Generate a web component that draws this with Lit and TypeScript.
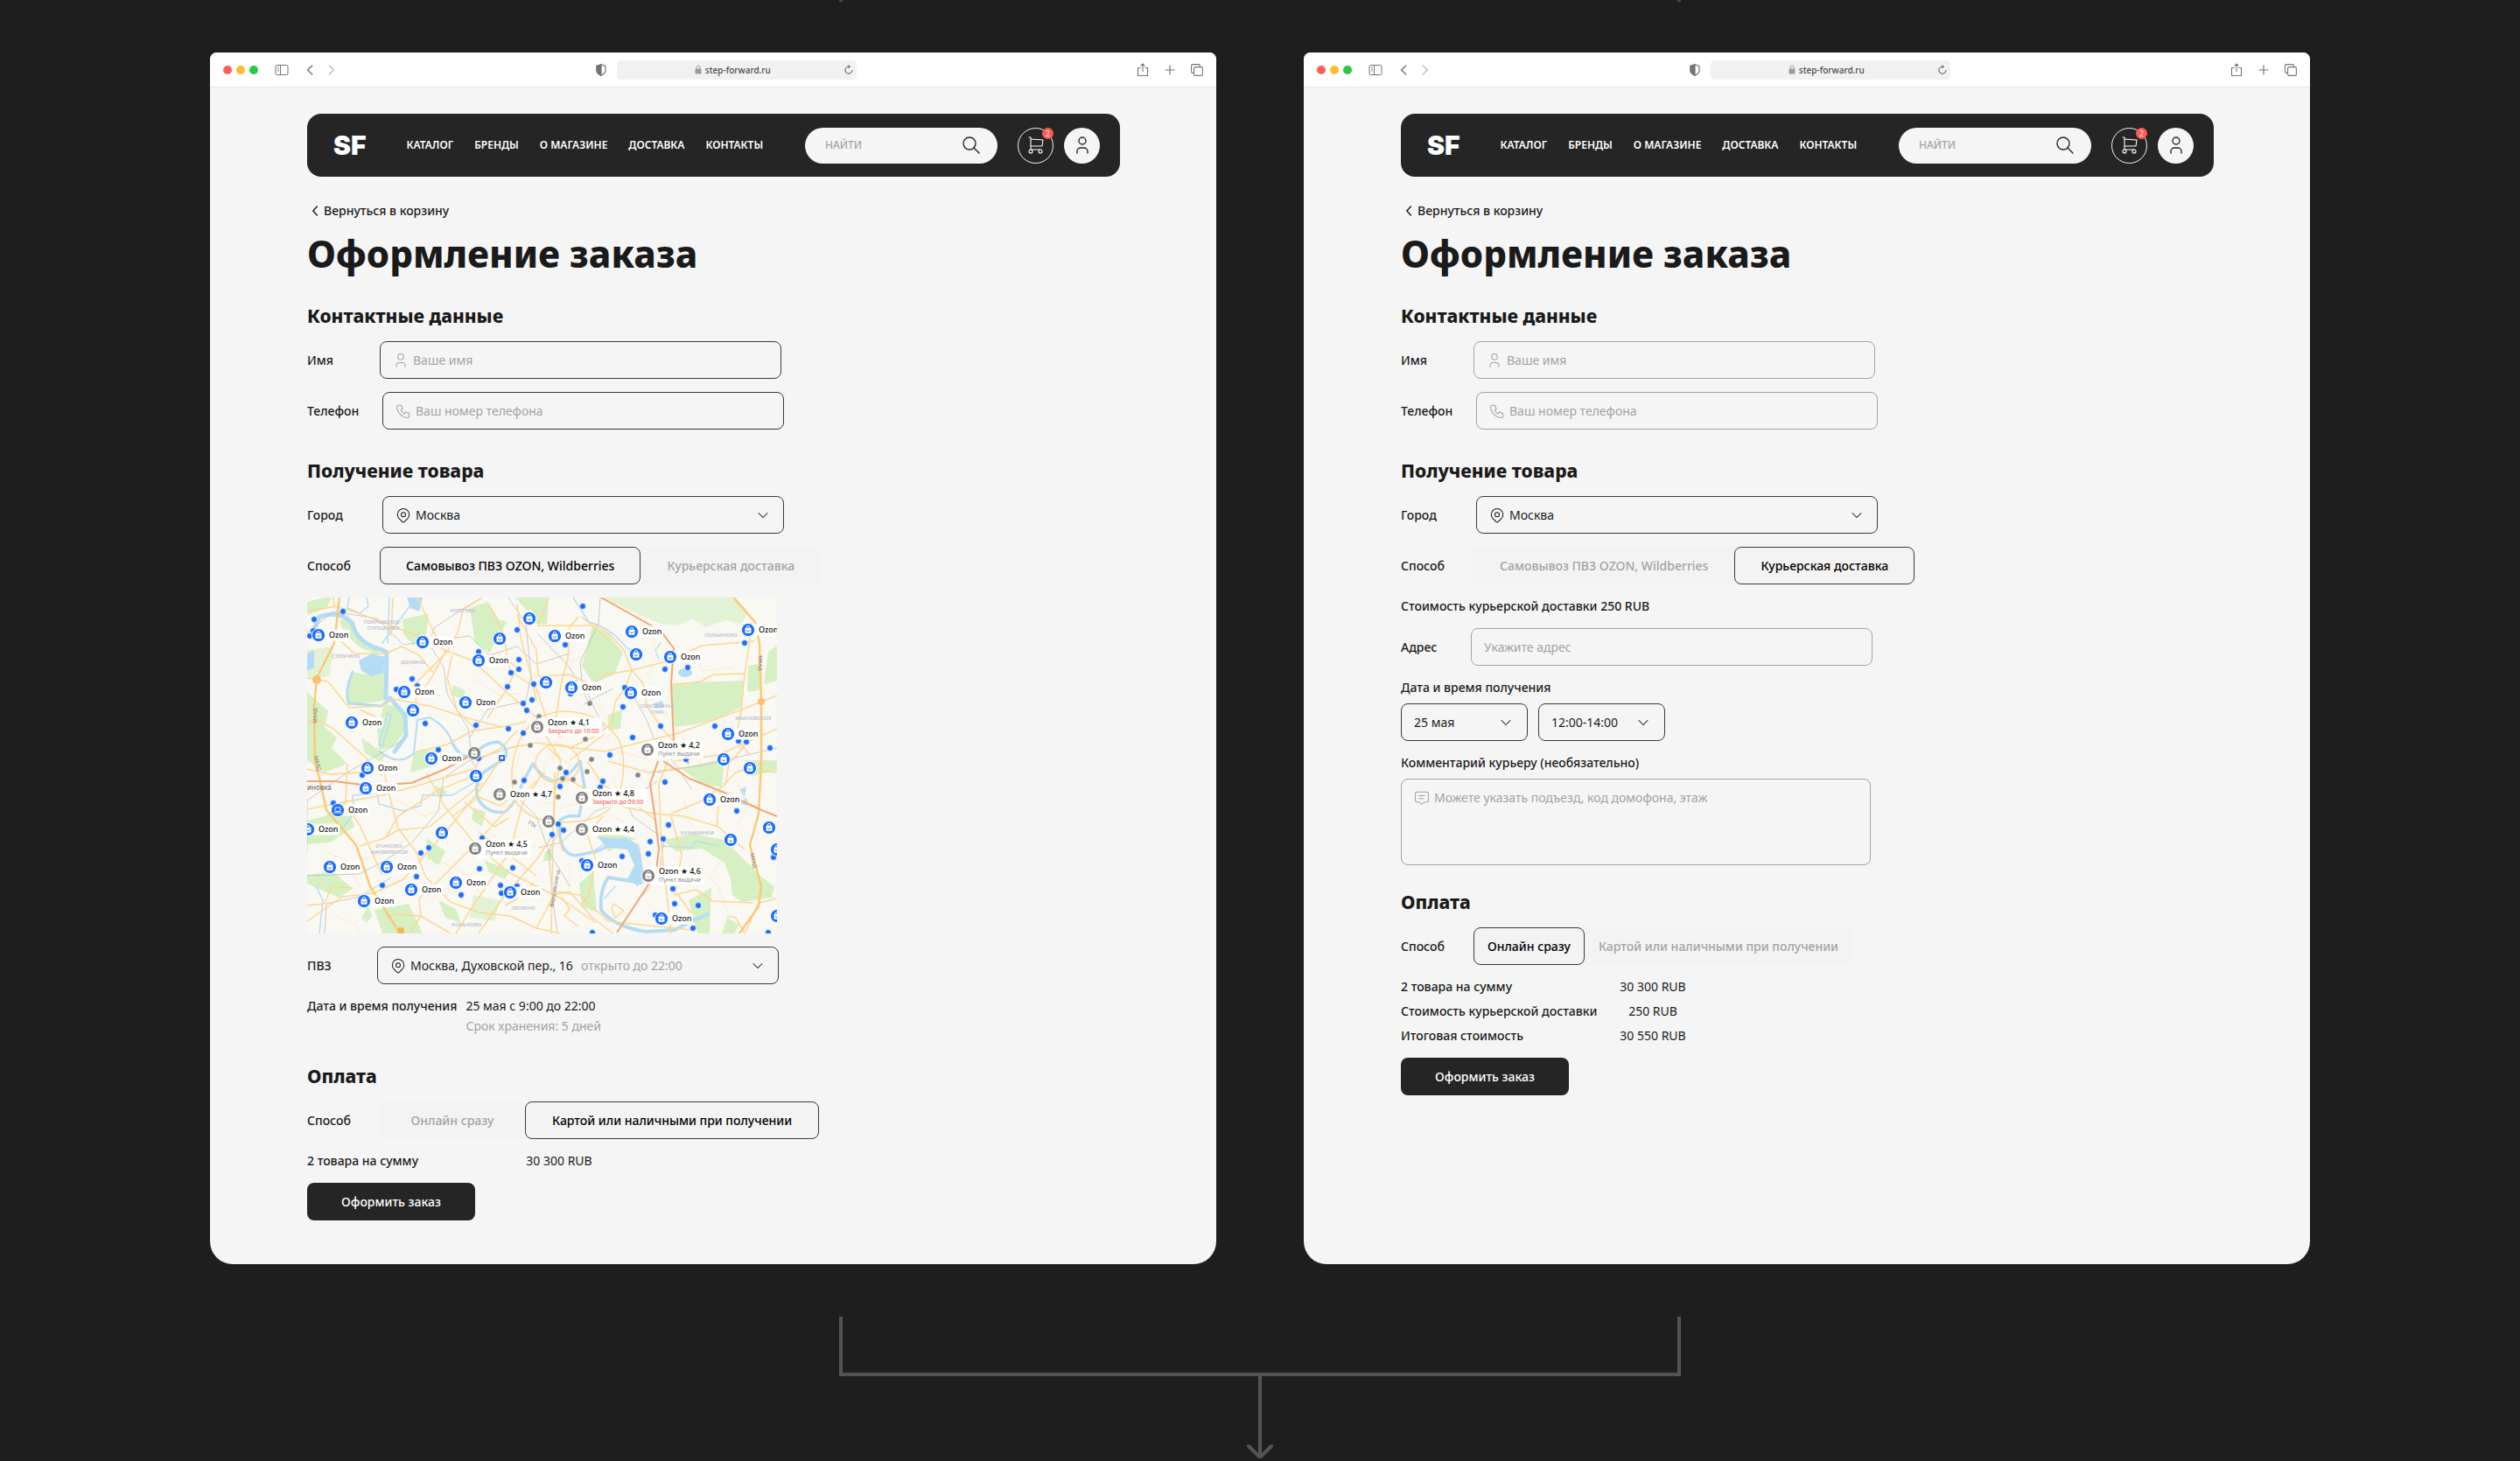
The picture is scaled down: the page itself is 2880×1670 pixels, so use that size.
import { LitElement, html, svg, css, nothing } from "lit";
import { customElement, property } from "lit/decorators.js";

/* ---------- icons (24-unit grid, outline style) ---------- */

const icon = (body: unknown, size: number, width = 1.25) => html`
  <svg class="icon" width=${size} height=${size} viewBox="0 0 24 24" fill="none" stroke="currentColor"
    stroke-width=${width} stroke-linecap="round" stroke-linejoin="round" aria-hidden="true">${body}</svg>`;

const userShape = svg`<circle cx="12" cy="7" r="4"/><path d="M6 21v-2a4 4 0 0 1 4-4h4a4 4 0 0 1 4 4v2"/>`;
const phoneShape = svg`<path d="M5 4h4l2 5-2.5 1.5a11 11 0 0 0 5 5L15 13l5 2v4a2 2 0 0 1-2 2A16 16 0 0 1 3 6a2 2 0 0 1 2-2"/>`;
const pinShape = svg`<circle cx="12" cy="11" r="3"/><path d="M17.657 16.657 13.414 20.9a2 2 0 0 1-2.827 0l-4.244-4.243a8 8 0 1 1 11.314 0z"/>`;
const messageShape = svg`<path d="M8 9h8M8 13h6M9 18H6a3 3 0 0 1-3-3V7a3 3 0 0 1 3-3h12a3 3 0 0 1 3 3v8a3 3 0 0 1-3 3h-3l-3 3z"/>`;
const chevronDown = svg`<path d="m6 9 6 6 6-6"/>`;
const searchShape = svg`<circle cx="10" cy="10" r="7"/><path d="m21 21-6-6"/>`;
const cartShape = svg`<circle cx="6" cy="19" r="2"/><circle cx="17" cy="19" r="2"/><path d="M17 17H6V3H4M6 5l14 1-1 7H6"/>`;

/* ---------- map data ---------- */

type Pin = { x: number; y: number; tag?: string; note?: string; off?: boolean; laptop?: boolean };

const pins: Pin[] = [
  { x: 13, y: 43, tag: "Ozon" }, { x: 132, y: 51, tag: "Ozon" }, { x: 196, y: 72, tag: "Ozon" },
  { x: 220, y: 47 }, { x: 254, y: 24 }, { x: 111, y: 108, tag: "Ozon" }, { x: 121, y: 129 },
  { x: 181, y: 120, tag: "Ozon" }, { x: 51, y: 143, tag: "Ozon" }, { x: 142, y: 184, tag: "Ozon" },
  { x: 191, y: 178, off: true }, { x: 69, y: 195, tag: "Ozon" }, { x: 67, y: 218, tag: "Ozon" },
  { x: 35, y: 243, tag: "Ozon", laptop: true }, { x: 1, y: 265, tag: "Ozon" }, { x: 154, y: 269 },
  { x: 193, y: 204 }, { x: 220, y: 225, tag: "Ozon ★ 4,7", off: true },
  { x: 192, y: 287, tag: "Ozon ★ 4,5", note: "Пункт выдачи", off: true },
  { x: 26, y: 308, tag: "Ozon" }, { x: 91, y: 308, tag: "Ozon" }, { x: 119, y: 334, tag: "Ozon" },
  { x: 65, y: 347, tag: "Ozon" }, { x: 170, y: 326, tag: "Ozon" }, { x: 232, y: 337, tag: "Ozon" },
  { x: 283, y: 44, tag: "Ozon" }, { x: 273, y: 97 }, { x: 302, y: 103, tag: "Ozon" },
  { x: 370, y: 109, tag: "Ozon" }, { x: 371, y: 39, tag: "Ozon" }, { x: 376, y: 65 },
  { x: 415, y: 68, tag: "Ozon" }, { x: 504, y: 37, tag: "Ozon" },
  { x: 263, y: 148, tag: "Ozon ★ 4,1", note: "Закрыто до 10:00", off: true },
  { x: 389, y: 174, tag: "Ozon ★ 4,2", note: "Пункт выдачи", off: true },
  { x: 481, y: 156, tag: "Ozon" }, { x: 476, y: 185 }, { x: 506, y: 195 },
  { x: 460, y: 231, tag: "Ozon" }, { x: 528, y: 263 }, { x: 484, y: 277 },
  { x: 314, y: 229, tag: "Ozon ★ 4,8", note: "Закрыто до 09:00", off: true },
  { x: 314, y: 265, tag: "Ozon ★ 4,4", off: true }, { x: 276, y: 256, off: true },
  { x: 320, y: 306, tag: "Ozon" }, { x: 390, y: 318, tag: "Ozon ★ 4,6", note: "Пункт выдачи", off: true },
  { x: 405, y: 367, tag: "Ozon" }, { x: 537, y: 288 }, { x: 537, y: 364 },
];

const blueDots = [
  [8, 25], [41, 16], [3, 44], [7, 38], [240, 37], [196, 62], [242, 71], [242, 82], [233, 86], [229, 102], [259, 99],
  [257, 117], [247, 121], [251, 129], [120, 93], [126, 101], [102, 105], [135, 144], [193, 146], [230, 150], [247, 155],
  [150, 174], [196, 184], [315, 10], [295, 54], [301, 110], [363, 103], [361, 125], [409, 82], [435, 80], [500, 52],
  [404, 147], [372, 160], [346, 180], [466, 147], [493, 164], [502, 165], [529, 172], [433, 185], [63, 203], [248, 209],
  [30, 235], [130, 292], [139, 286], [200, 275], [197, 310], [235, 309], [221, 329], [222, 338], [240, 330], [125, 319],
  [86, 329], [176, 340], [296, 200], [338, 210], [335, 217], [289, 216], [409, 211], [491, 244], [413, 260], [407, 276],
  [392, 279], [390, 293], [287, 259], [293, 266], [280, 271], [360, 296], [314, 301], [418, 333], [420, 350], [447, 352],
  [441, 378], [398, 363], [326, 383], [527, 383], [533, 297],
];
const greyDots = [
  [265, 136], [255, 169], [323, 121], [318, 162], [325, 185], [237, 211], [289, 195], [320, 199], [292, 207], [304, 208],
  [287, 228], [378, 203],
];

const parks = [
  "M109 25 139 18 136 42 122 55 110 42Z", "M186 12 206 5 219 25 229 28 219 42 209 63 192 52Z",
  "M326 32 344 42 361 63 351 88 327 98 314 78Z", "M416 98 499 95 497 125 471 138 444 145 420 148Z",
  "M504 78 516 76 520 105 503 108Z", "M527 62 537 55 537 95 522 99Z", "M36 26 50 24 60 45 82 60 80 64 62 58 44 42Z",
  "M52 85 66 88 89 82 89 118 46 123 47 96Z", "M88 122 109 126 112 152 99 170 82 175 80 150Z",
  "M0 108 24 130 20 148 34 160 28 172 46 190 20 200 0 186Z", "M62 160 90 180 84 188 66 178Z",
  "M77 357 116 350 132 384 86 384Z", "M62 366 70 352 74 364 68 372Z", "M407 277 441 270 477 277 497 297 520 320 534 330 531 343 497 348 486 340 484 322 477 303 451 287 421 290Z",
  "M427 195 477 184 474 217 451 213Z", "M311 327 327 313 331 360 314 353Z", "M0 317 29 313 52 333 36 343 0 327Z",
  "M0 255 20 250 44 232 54 262 26 280 0 282Z", "M166 100 181 106 178 116 166 112Z", "M238 0 262 0 268 16 250 14Z",
  "M0 5 20 0 28 0 22 12 0 20Z", "M190 240 204 245 200 262 188 254Z", "M136 275 158 290 150 306 138 298Z",
  "M146 214 160 222 152 232Z", "M344 134 360 128 358 150 344 152Z", "M122 176 146 174 152 190 118 200Z",
  "M436 346 462 332 460 384 446 384Z", "M376 312 384 318 366 326Z", "M202 300 232 312 226 322 208 314Z",
  "M332 272 350 268 376 276 344 290Z", "M272 290 282 286 280 300 270 302Z", "M480 366 494 374 488 384 474 384Z",
  "M500 186 537 186 537 198 508 204Z", "M254 0 276 0 274 30 262 30Z", "M150 346 170 356 176 372 158 366Z",
];

const roads = [
  "M0 16 32 10 56 17 122 42 162 62 189 72 239 118 290 160", "M39 50 54 64 90 64 108 56 128 66 144 86",
  "M0 92 24 96 48 126 86 124 98 116 140 124 184 138 222 148", "M126 0 144 38 158 62 142 92 124 116 126 126",
  "M200 0 178 14 172 40 160 62 104 118", "M0 142 12 140 30 150 66 182 86 204", "M166 66 160 92 172 130 192 150",
  "M208 8 224 40 232 84 262 104 274 140", "M240 8 244 46 256 90 262 118", "M218 64 240 80 226 108 206 138",
  "M264 32 330 32 346 42 362 60 371 83 364 102 352 120 348 145 326 160 300 172", "M310 22 300 34 298 70 290 100 284 140",
  "M264 90 300 88 326 100 340 88 371 83 411 73 451 55 511 50", "M314 22 346 50", "M371 83 384 98 388 124 404 147 419 165",
  "M371 168 424 155 497 128 537 112", "M417 100 450 96 464 88 500 87", "M508 28 504 62 500 88 496 130 490 160 506 180",
  "M230 172 262 166 290 170 340 176 371 168", "M126 176 160 168 190 152 222 148 250 142", "M276 172 290 186 284 214 282 250 292 290",
  "M240 152 222 172 196 186 190 204 150 220 104 250 90 274", "M0 242 30 236 86 226 130 214 190 196",
  "M86 190 94 226 104 264 124 290 136 320 164 348 196 360 232 364 262 378 290 384", "M46 190 44 236 60 260 86 318",
  "M90 366 102 362 130 364 164 384", "M0 370 40 342 76 338 110 322 160 266 196 222 220 186", "M60 284 86 276 104 266 140 262 166 240 200 212",
  "M136 200 158 240 194 284 230 314 290 344 330 372", "M118 382 130 364 128 344 152 322 196 278 236 234 262 210",
  "M170 384 190 352 232 290 246 236 270 200", "M166 250 196 228 220 238 240 224", "M180 234 214 262 230 252",
  "M196 384 226 340 262 300 282 270", "M262 378 282 340 300 336 326 366 350 384", "M283 200 281 270 279 384",
  "M290 186 268 150", "M300 186 340 156", "M296 206 346 236 397 247 430 250 470 262 500 288",
  "M320 187 338 214 372 234 400 256", "M338 250 320 270 330 300 322 340 314 350", "M282 336 312 340 344 370 400 376 440 380",
  "M412 187 402 213 405 287 410 330 416 384", "M416 250 428 294 420 340 444 334 464 347 510 349", "M424 340 440 362",
  "M344 187 390 200 430 194", "M416 247 448 234 478 214 482 190 500 170", "M468 262 472 220", "M519 190 490 200 476 214",
  "M537 344 516 349 500 384", "M0 352 20 350 28 330 52 332", "M292 344 300 356 294 364 310 376", "M350 350 362 358 352 366 348 356Z",
  "M0 196 26 202 60 200", "M196 268 262 318", "M226 352 252 338 258 326", "M86 140 60 128", "M500 384 490 366 480 364",
  "M240 20 262 60 264 90", "M30 0 31 12", "M98 0 96 44", "M276 0 264 32", "M537 200 519 198", "M420 187 470 180 537 150",
];

const lanes = [
  "M12 60 30 70 52 66", "M110 70 130 86 150 78", "M190 92 220 112 244 110", "M280 60 300 74 316 66", "M384 20 400 60 390 92",
  "M440 60 452 84 486 80", "M400 120 430 160 450 190", "M330 120 352 150 332 176", "M244 176 236 200 256 228 290 240 324 232",
  "M100 230 134 250 156 240", "M60 300 96 290 120 270", "M20 290 44 300 60 330", "M150 300 184 318 206 350", "M210 270 240 290 262 284",
  "M350 250 372 262 384 300", "M430 230 440 262", "M440 300 470 330 480 360", "M350 206 360 240 386 236", "M140 346 160 332 180 346",
  "M30 362 56 374 60 384", "M490 210 506 236 490 262", "M480 290 460 320", "M300 310 300 334", "M340 190 356 176 388 184",
  "M270 190 284 180 300 190 300 206 284 212 272 206Z",
];

const districts: [number, number, string][] = [
  [86, 30, "ПОКРОВСКОЕ-"], [87, 37, "СТРЕШНЕВО"], [44, 69, "СТРОГИНО"], [121, 76, "ЩУКИНО"], [178, 17, "КОПТЕВО"],
  [473, 45, "ГОЛЬЯНОВО"], [400, 126, "СОКОЛИНАЯ"], [400, 133, "ГОРА"], [510, 140, "ИВАНОВСКОЕ"], [94, 286, "ОЧАКОВО-"],
  [94, 293, "МАТВЕЕВСКОЕ"], [247, 357, "ЗЮЗИНО"], [182, 376, "КОНЬКОВО"], [446, 271, "КУЗЬМИНКИ"],
];

@customElement("pickup-map")
export class PickupMap extends LitElement {
  static styles = css`
    :host { display: block; }
    .map { display: block; width: 100%; height: auto; font-family: "Noto Sans", "Open Sans", sans-serif; }
    .park { fill: #d6f0c4; }
    .forest { fill: #e2f3d5; }
    .lake { fill: #b5dcf5; }
    .river { fill: none; stroke: #b5dcf5; stroke-linejoin: round; stroke-linecap: round; }
    .lane { fill: none; stroke: #fdebc6; stroke-width: 1; }
    .road { fill: none; stroke: #fdd792; stroke-width: 1.5; stroke-linejoin: round; }
    .ring { fill: none; stroke: #fcc874; stroke-width: 2.4; stroke-linejoin: round; }
    .trunk { fill: none; stroke: #f4a673; stroke-width: 2; stroke-linejoin: round; }
    .rail { fill: none; stroke: #bdbdbd; stroke-width: 0.8; stroke-linejoin: round; }
    .district { font-size: 6px; font-weight: 600; fill: #bdbdd2; text-anchor: middle; }
    .street { font-size: 6px; fill: #77736c; text-anchor: middle; }
    .town { font-size: 8px; fill: #66625c; }
    .name { font-size: 9px; font-weight: 500; fill: #111; }
    .note { font-size: 7px; fill: #8a8a8a; }
    .closed { fill: #f5483b; }
  `;

  private renderPin(p: Pin) {
    const width = p.note ? (p.note.startsWith("З") ? 74 : 64) : p.tag && p.tag.length > 4 ? 60 : 36;
    const height = p.note ? 21 : 13;
    return svg`
      ${p.tag ? svg`
        <rect x=${p.x} y=${p.y - height / 2} width=${width} height=${height} rx="3" fill="#fff" fill-opacity="0.9"/>
        <text class="name" x=${p.x + 12} y=${p.note ? p.y - 2 : p.y + 3}>${p.tag}</text>` : nothing}
      ${p.note ? svg`<text class=${p.note.startsWith("З") ? "note closed" : "note"} x=${p.x + 12} y=${p.y + 7}>${p.note}</text>` : nothing}
      <circle cx=${p.x} cy=${p.y} r="7.6" fill=${p.off ? "#858585" : "#1a6dff"} stroke="#fff" stroke-width="1"/>
      ${p.laptop ? svg`
        <rect x=${p.x - 3} y=${p.y - 3} width="6" height="4.4" rx="0.6" fill="none" stroke="#fff"/>
        <path d=${`M${p.x - 4.6} ${p.y + 3}h9.2`} stroke="#fff"/>` : svg`
        <rect x=${p.x - 3.5} y=${p.y - 2.4} width="7" height="6.2" rx="1" fill="#fff"/>
        <path d=${`M${p.x - 1.7} ${p.y - 2.4}v-.6a1.7 1.7 0 0 1 3.4 0v.6`} fill="none" stroke="#fff" stroke-width="0.9"/>
        <path d=${`M${p.x - 1.5} ${p.y + 0.2}a1.5 1.5 0 0 0 3 0`} fill="none" stroke=${p.off ? "#858585" : "#1a6dff"} stroke-width="0.8"/>`}`;
  }

  render() {
    return html`
      <svg class="map" viewBox="0 0 537 384" role="img" aria-label="Пункты выдачи на карте">
        <rect width="537" height="384" fill="#faf8f3"/>
        <path class="forest" d="M338 0H490L504 16 496 30 478 26 456 34 440 24 424 32 404 30 376 18Z"/>
        <path class="forest" d="M0 60 30 56 26 90 0 92ZM190 340 220 346 214 370 186 366Z"/>
        ${parks.map((d) => svg`<path class="park" d=${d}/>`)}
        <path class="lake" d="M59 72 74 64 90 68 87 86 74 90 62 84ZM114 0 132 0 128 16 118 12ZM331 273 350 276 364 275 380 283 385 320 378 330 366 322 374 306 366 288 344 286ZM424 86a8 5 0 1 0 16 0 8 5 0 1 0-16 0M396 121 406 118 408 126 398 127ZM0 64 8 60 8 80 0 84ZM494 220 502 216 500 228ZM495 236 504 238 502 228Z"/>
        <path class="river" stroke-width="5" d="M9 34 14 22Q38 14 52 30 56 52 86 60L91 63 90 115"/>
        <path class="river" stroke-width="3" d="M52 85Q42 108 48 121L85 124 95 115"/>
        <path class="river" stroke-width="5" d="M95 115 112 135 113 158 100 176"/>
        <path class="river" stroke-width="2" d="M83 176Q105 194 122 178L126 140 140 137Q160 148 166 166"/>
        <path class="river" stroke-width="3.4" d="M166 166Q174 184 190 182 200 166 218 165 232 172 226 184L204 198Q190 210 195 230 206 248 226 245 240 234 246 212L258 190Q268 206 282 210 300 204 306 194L312 187 317 217 311 250Q296 248 289 255L289 273Q292 294 307 295L331 290 347 283"/>
        <path class="river" stroke-width="4" d="M382 326 344 320Q334 335 336 357 350 376 387 382L420 380 440 370 458 362"/>
        <path class="river" stroke-width="1.4" d="M304 0 322 28Q346 34 362 54L372 64M48 0 46 12 60 18 70 10 68 0M86 52 110 20 124 0M94 0 92 52M42 262 54 246 52 226 80 224 82 236 110 244 130 238 132 226 166 226 190 212M10 330 18 346 14 384M402 70 398 60 404 52M404 284 440 286 444 278 470 284"/>
        <path class="river" stroke-width="1.4" d="M92 132 82 168 86 170 96 134ZM330 288 352 274M352 330 340 344"/>
        ${lanes.map((d) => svg`<path class="lane" d=${d}/>`)}
        <path class="rail" d="M0 40 30 16 80 24 110 54 150 48 186 44 208 66 240 56 262 76 300 64M139 52 156 80 160 110 184 150 188 182M139 52 146 34 176 14 200 0M335 0 333 30 312 74 314 96 330 130 340 150M264 42 300 80 322 120M230 0 250 30 256 90 250 118 206 128 186 160M0 290 0 232 46 200 108 164M0 318 60 316 90 300 120 280 150 244 156 206 186 186 240 170M264 286 290 280 310 262 330 244 370 230 400 210M371 109 388 140 396 160 420 190 440 220M384 340 402 318 408 276 372 250 368 240M286 384 280 340 276 290 290 262M20 384 22 350 60 342 96 320M232 220 262 250 276 290 300 330M400 200 460 190 537 172M186 182 196 202M350 104 330 114 316 122"/>
        ${roads.map((d) => svg`<path class="road" d=${d}/>`)}
        <path class="road" d="M244 160Q262 130 296 130 340 132 358 166 366 196 356 226 344 254 306 256 262 262 240 236 226 200 244 160Z"/>
        <ellipse class="road" cx="286" cy="190" rx="25" ry="22"/>
        <path class="ring" d="M37 0 31 52 11 92 8 125 9 190 14 206 22 243 56 283 72 330 106 384"/>
        <path class="ring" d="M487 0 512 28 517 52 519 118 519 187 516 247 506 283 519 330 516 353 494 384"/>
        <path class="trunk" d="M336 0 404 38 419 58 416 98 419 165 436 190M401 187 392 213 397 247 402 287 399 313 387 333 354 383M407 187 437 207 477 223 517 242 537 250M0 210 32 210 69 215 119 212 156 197 184 182"/>
        <circle cx="519" cy="119" r="4" fill="#fbbf6e"/><circle cx="11" cy="94" r="5" fill="#fbbf6e"/><circle cx="107" cy="381" r="4" fill="#f9b45f"/>
        ${districts.map(([x, y, t]) => svg`<text class="district" x=${x} y=${y}>${t}</text>`)}
        <text class="street" transform="translate(11 135) rotate(-90)">МКАД</text>
        <text class="street" transform="translate(10 190) rotate(75)">МКАД</text>
        <text class="street" transform="translate(516 75) rotate(90)">МКАД</text>
        <text class="street" transform="translate(508 301) rotate(78)">МКАД</text>
        <text class="street" transform="translate(256 261) rotate(32)">ТТК</text>
        <text class="street" transform="translate(285 332) rotate(-80)">Варшавское ш.</text>
        <text class="town" x="0" y="220">иновка</text>
        <rect x="219" y="180" width="7" height="7" rx="1" fill="#2f74d8"/><path d="M221 182h3v2.6h-3z" fill="#fff"/>
        ${blueDots.map(([x, y]) => svg`<circle cx=${x} cy=${y} r="3.4" fill="#1a6dff" stroke="#fff" stroke-width="0.6"/>`)}
        ${greyDots.map(([x, y]) => svg`<circle cx=${x} cy=${y} r="3.2" fill="#858585" stroke="#fff" stroke-width="0.6"/>`)}
        ${pins.map((p) => this.renderPin(p))}
      </svg>`;
  }
}

/* ---------- browser window with the checkout page ---------- */

@customElement("checkout-window")
export class CheckoutWindow extends LitElement {
  @property() mode: "pickup" | "courier" = "pickup";

  static styles = css`
    :host {
      display: block;
      overflow: hidden;
      border-radius: 8px 8px 26px 26px;
      background: #f5f5f5;
      color: #1a1a1a;
      font-family: "Noto Sans", "Open Sans", sans-serif;
      font-size: 14px;
      line-height: 20px;
    }
    * { box-sizing: border-box; }
    input, select, textarea, button {
      font: inherit; color: inherit; border: 0; background: none; margin: 0; padding: 0; outline: none; border-radius: 0;
    }
    ::placeholder { color: #a3a3a3; opacity: 1; }
    .icon { flex: none; display: block; }

    .toolbar {
      display: flex; align-items: center; height: 40px; padding: 0 15px;
      background: #fff; border-bottom: 1px solid #e6e6e6; color: #747474;
    }
    .lights { display: flex; gap: 5px; margin-right: 19px; }
    .light { width: 10px; height: 10px; border-radius: 50%; }
    .red { background: #ff5f57; }
    .yellow { background: #febc2e; }
    .green { background: #28c840; }
    .tool { display: block; color: inherit; }
    .history { display: flex; gap: 17px; margin-left: 20px; }
    .faded { color: #bdbdbd; }
    .space-left { flex: 14; }
    .space-right { flex: 15; }
    .address {
      display: flex; align-items: center; justify-content: center; gap: 4px; width: 274px; height: 22px;
      margin-left: 12px; padding: 0 4px 0 8px; border-radius: 5px; background: #f1f1f1;
      font-size: 10px; line-height: 14px; color: #4a4a4a; font-weight: 500;
    }
    .address-text { margin-right: auto; }
    .lock { margin-left: auto; color: #9b9b9b; }
    .actions { display: flex; gap: 17px; }

    .page { padding: 30px 110px 50px 111px; }
    .header {
      display: flex; align-items: center; height: 72px; padding: 0 23px 0 30px;
      border-radius: 16px; background: #252525; color: #fff;
    }
    .logo { font-family: "Inter", sans-serif; font-size: 30px; line-height: 32px; font-weight: 900; color: #fff; text-decoration: none; }
    .nav { display: flex; gap: 24px; margin-left: 46px; }
    .nav-link { color: #fff; text-decoration: none; font-size: 12px; font-weight: 600; }
    .search {
      display: flex; align-items: center; width: 220px; height: 41px; margin-left: auto; padding: 0 18px 0 23px;
      border-radius: 21px; background: #f5f5f5; color: #252525;
    }
    .search-input { flex: 1; min-width: 0; font-size: 12px; font-weight: 500; }
    .round {
      position: relative; display: flex; align-items: center; justify-content: center; width: 41px; height: 41px;
      border-radius: 50%; cursor: pointer;
    }
    .cart { margin: 0 12px 0 23px; border: 1px solid #f5f5f5; }
    .profile { background: #f5f5f5; color: #252525; }
    .badge {
      position: absolute; top: -1px; right: -1px; width: 13px; height: 13px; border-radius: 50%;
      background: #ff5a52; color: #fff; font-size: 8px; line-height: 13px; text-align: center;
    }

    .back {
      display: flex; align-items: center; gap: 3px; width: max-content; margin-top: 29px;
      color: #1a1a1a; text-decoration: none; font-weight: 500;
    }
    .title { margin: 11px 0 0; font-size: 42px; line-height: 56px; font-weight: 800; }
    .form { display: flex; flex-direction: column; align-items: flex-start; gap: 15px; margin-top: 28px; }
    .heading { margin: 0 0 -1px; font-size: 21px; line-height: 30px; font-weight: 800; }
    .section { display: flex; flex-direction: column; align-items: flex-start; gap: 15px; width: 100%; max-width: 588px; }
    .section + .section { margin-top: 17px; }
    .section.near { margin-top: 12px; }
    .row { display: flex; align-items: center; width: 100%; }
    .label { flex: none; font-weight: 500; }
    .short { width: 80px; }
    .medium { width: 83px; }
    .long { width: 86px; }
    .field {
      display: flex; align-items: center; gap: 4px; flex: 0 1 459px; height: 43px; padding: 0 13px;
      border: 1px solid #3a3a3a; border-radius: 8px; color: #1a1a1a;
    }
    .field.muted { border-color: #a3a3a3; }
    .field.plain { padding: 0 14px; }
    .hint { color: #a3a3a3; }
    .control { flex: 1; min-width: 0; height: 41px; }
    select { appearance: none; cursor: pointer; }
    .fit { flex: none; }
    .aside { flex: 1; padding-left: 5px; color: #a3a3a3; }
    .map { width: 537px; max-width: 100%; }

    .segments { display: flex; background: #f3f3f3; height: 43px; }
    .segment { display: flex; cursor: pointer; }
    .segment-input { position: absolute; opacity: 0; width: 1px; height: 1px; }
    .segment-text {
      display: flex; align-items: center; justify-content: center; height: 43px; border: 1px solid transparent;
      border-radius: 8px; color: #a3a3a3; font-weight: 500; white-space: nowrap;
    }
    .segment-input:checked + .segment-text { border-color: #3a3a3a; color: #000; }
    .roomy .segment-text { min-width: 166px; padding: 0 30px; }
    .regular .segment-text { padding: 0 29px; }
    .compact .segment-text { padding: 0 15px; }

    .text { margin: 0; font-weight: 500; }
    .slot { display: grid; grid-template-columns: auto auto; gap: 3px 10px; margin: 0; white-space: nowrap; }
    .slot-note { grid-column: 2; color: #a3a3a3; }
    dd { margin: 0; }
    dt { font-weight: 500; }
    .stack { display: flex; flex-direction: column; align-items: flex-start; gap: 8px; width: 100%; }
    .pair { display: flex; gap: 12px; }
    .pair .field { flex: 0 0 145px; }
    .comment { display: flex; gap: 4px; width: 537px; max-width: 100%; height: 99px; padding: 11px 13px; border: 1px solid #a3a3a3; border-radius: 8px; }
    .comment-input { flex: 1; resize: none; height: 75px; }
    .totals { display: grid; grid-template-columns: 250px 76px; gap: 8px 0; margin: 0; }
    .totals dd { text-align: center; white-space: nowrap; }
    .submit {
      width: 192px; height: 43px; border-radius: 8px; background: #252525; color: #fff; font-weight: 500; cursor: pointer;
    }
  `;

  private toolbar() {
    return html`
      <div class="toolbar">
        <div class="lights"><span class="light red"></span><span class="light yellow"></span><span class="light green"></span></div>
        <svg class="tool" width="16" height="14" viewBox="0 0 16 14" fill="none" stroke="currentColor" aria-hidden="true">
          <rect x="1" y="1.5" width="14" height="11" rx="1.5"/><path d="M6.5 1.5v11M3 4h1.6M3 6h1.6M3 8h1.6"/>
        </svg>
        <div class="history">
          <svg class="tool" width="8" height="14" viewBox="0 0 8 14" fill="none" stroke="currentColor" stroke-width="1.4" stroke-linecap="round" aria-hidden="true"><path d="M6.8 2 1.6 7l5.2 5"/></svg>
          <svg class="tool faded" width="8" height="14" viewBox="0 0 8 14" fill="none" stroke="currentColor" stroke-width="1.4" stroke-linecap="round" aria-hidden="true"><path d="m1.2 2 5.2 5-5.2 5"/></svg>
        </div>
        <span class="space-left"></span>
        <svg class="tool" width="12" height="14" viewBox="0 0 12 14" fill="none" stroke="currentColor" stroke-width="1.2" aria-hidden="true">
          <path d="M6 .8 11 2.4v5.2c0 2.6-2 4.4-5 5.6-3-1.2-5-3-5-5.6V2.4z"/><path d="M6 .8v12.4c-3-1.2-5-3-5-5.6V2.4z" fill="currentColor"/>
        </svg>
        <div class="address">
          <svg class="lock" width="8" height="11" viewBox="0 0 8 11" aria-hidden="true"><rect x="0.5" y="4.6" width="7" height="6" rx="1" fill="currentColor"/><path d="M2 5V3a2 2 0 0 1 4 0v2" fill="none" stroke="currentColor"/></svg>
          <span class="address-text">step-forward.ru</span>
          <svg class="tool" width="10" height="11" viewBox="0 0 10 11" fill="none" stroke="currentColor" aria-hidden="true"><path d="M8.9 6A4 4 0 1 1 5 2.2h1M4.6.4 6.4 2.2 4.6 4"/></svg>
        </div>
        <span class="space-right"></span>
        <div class="actions">
          <svg class="tool" width="14" height="16" viewBox="0 0 14 16" fill="none" stroke="currentColor" stroke-width="1.1" aria-hidden="true"><path d="M4.6 5.5H1.5v9h11v-9H9.4M7 10V1.2M4.6 3.4 7 1l2.4 2.4"/></svg>
          <svg class="tool" width="14" height="16" viewBox="0 0 14 16" fill="none" stroke="currentColor" stroke-width="1.2" aria-hidden="true"><path d="M7 2.5v11M1.5 8h11"/></svg>
          <svg class="tool" width="14" height="16" viewBox="0 0 14 16" fill="none" stroke="currentColor" stroke-width="1.1" aria-hidden="true"><rect x="3.6" y="4.6" width="9.8" height="9.8" rx="1.4"/><path d="M3.4 11.4H2A1.4 1.4 0 0 1 .6 10V3A1.4 1.4 0 0 1 2 1.6h7A1.4 1.4 0 0 1 10.4 3v1.4"/></svg>
        </div>
      </div>`;
  }

  private header() {
    return html`
      <header class="header">
        <a class="logo" href="#">SF</a>
        <nav class="nav">
          ${["КАТАЛОГ", "БРЕНДЫ", "О МАГАЗИНЕ", "ДОСТАВКА", "КОНТАКТЫ"].map((t) => html`<a class="nav-link" href="#">${t}</a>`)}
        </nav>
        <label class="search">
          <input class="search-input" type="text" placeholder="НАЙТИ" aria-label="Найти" />
          ${icon(searchShape, 24, 1.4)}
        </label>
        <button class="round cart" aria-label="Корзина">${icon(cartShape, 24, 1.1)}<span class="badge">2</span></button>
        <button class="round profile" aria-label="Профиль">${icon(userShape, 24, 1.4)}</button>
      </header>
      <a class="back" href="#">
        <svg class="icon" width="16" height="14" viewBox="0 0 16 14" fill="none" stroke="currentColor" stroke-width="1.4" stroke-linecap="round" aria-hidden="true"><path d="M11.4 2 6.8 7l4.6 5"/></svg>
        Вернуться в корзину
      </a>
      <h1 class="title">Оформление заказа</h1>`;
  }

  private textRow(id: string, label: string, size: string, shape: unknown, hint: string, muted: boolean) {
    return html`
      <div class="row">
        <label class="label ${size}" for=${id}>${label}</label>
        <div class="field ${muted ? "muted" : ""} ${shape ? "" : "plain"}">
          ${shape ? html`<span class="hint">${icon(shape, 20)}</span>` : nothing}
          <input class="control" id=${id} type="text" placeholder=${hint} />
        </div>
      </div>`;
  }

  private segments(name: string, pad: string, options: string[], active: number) {
    return html`
      <div class="row">
        <span class="label medium" id="${name}-label">Способ</span>
        <div class="segments ${pad}" role="radiogroup" aria-labelledby="${name}-label">
          ${options.map((text, i) => html`
            <label class="segment">
              <input class="segment-input" type="radio" name=${name} .checked=${i === active} />
              <span class="segment-text">${text}</span>
            </label>`)}
        </div>
      </div>`;
  }

  private pickup() {
    return html`
      <pickup-map class="map"></pickup-map>
      <div class="row">
        <label class="label short" for="point">ПВЗ</label>
        <div class="field">
          ${icon(pinShape, 20)}
          <select class="control fit" id="point"><option>Москва, Духовской пер., 16</option></select>
          <span class="aside">открыто до 22:00</span>
          ${icon(chevronDown, 20)}
        </div>
      </div>
      <dl class="slot">
        <dt>Дата и время получения</dt><dd>25 мая с 9:00 до 22:00</dd>
        <dd class="slot-note">Срок хранения: 5 дней</dd>
      </dl>`;
  }

  private courier() {
    return html`
      <p class="text">Стоимость курьерской доставки 250 RUB</p>
      ${this.textRow("street", "Адрес", "short", null, "Укажите адрес", true)}
      <div class="stack">
        <span class="text" id="when">Дата и время получения</span>
        <div class="pair" role="group" aria-labelledby="when">
          <div class="field plain"><select class="control" aria-label="Дата"><option>25 мая</option></select>${icon(chevronDown, 20)}</div>
          <div class="field plain"><select class="control" aria-label="Время"><option>12:00-14:00</option></select>${icon(chevronDown, 20)}</div>
        </div>
      </div>
      <div class="stack">
        <label class="text" for="comment">Комментарий курьеру (необязательно)</label>
        <div class="comment">
          <span class="hint">${icon(messageShape, 20)}</span>
          <textarea class="comment-input" id="comment" placeholder="Можете указать подъезд, код домофона, этаж"></textarea>
        </div>
      </div>`;
  }

  render() {
    const courier = this.mode === "courier";
    const totals = courier
      ? [["2 товара на сумму", "30 300 RUB"], ["Стоимость курьерской доставки", "250 RUB"], ["Итоговая стоимость", "30 550 RUB"]]
      : [["2 товара на сумму", "30 300 RUB"]];
    return html`
      ${this.toolbar()}
      <main class="page">
        ${this.header()}
        <form class="form">
          <section class="section">
            <h2 class="heading">Контактные данные</h2>
            ${this.textRow("name", "Имя", "medium", userShape, "Ваше имя", courier)}
            ${this.textRow("phone", "Телефон", "long", phoneShape, "Ваш номер телефона", courier)}
          </section>
          <section class="section">
            <h2 class="heading">Получение товара</h2>
            <div class="row">
              <label class="label long" for="city">Город</label>
              <div class="field">
                ${icon(pinShape, 20)}
                <select class="control" id="city"><option>Москва</option></select>
                ${icon(chevronDown, 20)}
              </div>
            </div>
            ${this.segments("delivery", "regular", ["Самовывоз ПВЗ OZON, Wildberries", "Курьерская доставка"], courier ? 1 : 0)}
            ${courier ? this.courier() : this.pickup()}
          </section>
          <section class="section ${courier ? "near" : ""}">
            <h2 class="heading">Оплата</h2>
            ${this.segments("payment", courier ? "compact" : "roomy", ["Онлайн сразу", "Картой или наличными при получении"], courier ? 0 : 1)}
            <dl class="totals">${totals.map(([k, v]) => html`<dt>${k}</dt><dd>${v}</dd>`)}</dl>
            <button class="submit" type="button">Оформить заказ</button>
          </section>
        </form>
      </main>`;
  }
}

/* ---------- canvas with both windows and the flow arrow ---------- */

@customElement("app-root")
export class AppRoot extends LitElement {
  static styles = css`
    :host { display: block; min-height: 100vh; background: #1e1e1e; }
    * { box-sizing: border-box; }
    .inlet { width: 33.4%; height: 2px; margin: 0 auto 58px; border: solid #484848; border-width: 0 4px; }
    .windows { display: grid; grid-template-columns: 1fr 1fr; gap: 100px; padding: 0 240px; }
    .flow { display: flex; flex-direction: column; align-items: center; margin-top: 60px; }
    .bracket { width: 33.4%; height: 68px; border: 4px solid #545454; border-top: 0; }
    .arrow { display: block; }
  `;

  render() {
    return html`
      <div class="inlet"></div>
      <div class="windows">
        <checkout-window mode="pickup"></checkout-window>
        <checkout-window mode="courier"></checkout-window>
      </div>
      <div class="flow">
        <div class="bracket"></div>
        <svg class="arrow" width="34" height="94" viewBox="0 0 34 94" fill="none" stroke="#545454" stroke-width="4" stroke-linecap="round" aria-hidden="true">
          <path d="M17-2v94M4 80l13 13 13-13"/>
        </svg>
      </div>`;
  }
}
